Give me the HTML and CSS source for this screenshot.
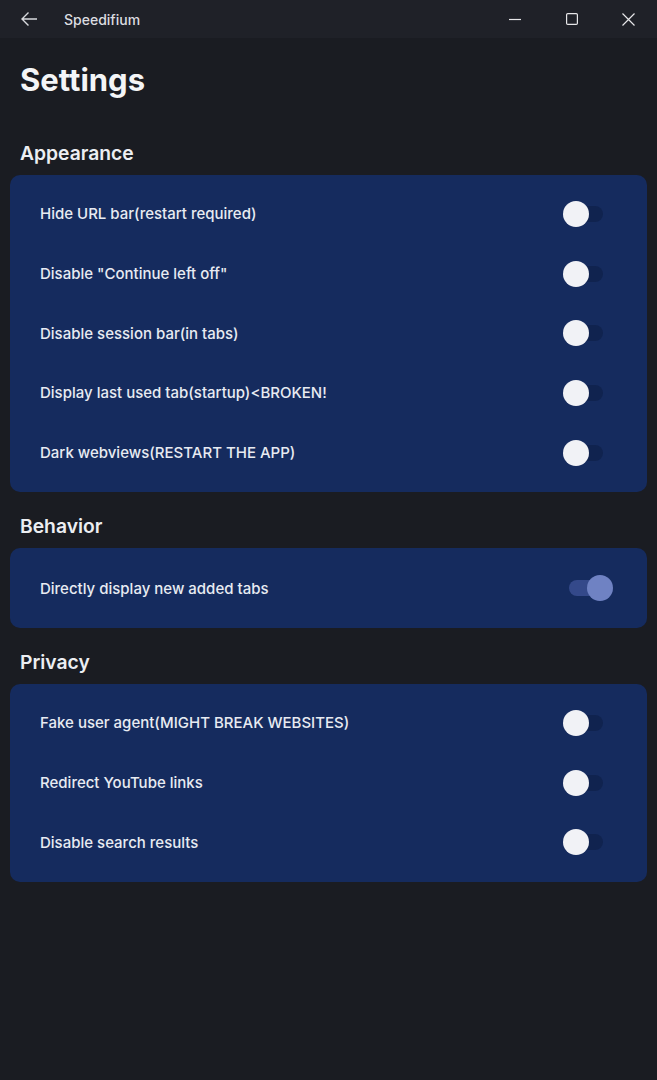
FILE: index.html
```html
<!DOCTYPE html>
<html lang="en">
  <head>
    <meta charset="UTF-8" />
    <meta name="viewport" content="width=device-width, initial-scale=1.0" />
    <title>Speedifium</title>
    <link rel="stylesheet" href="styles.css">
  </head>
  <body>
    <div class="titlebar">
      <div class="back">
        <svg width="18" height="16" viewBox="0 0 18 16"><path d="M17 8H2M8.5 1.5L2 8l6.5 6.5" fill="none" stroke="#d8d9dd" stroke-width="1.4"/></svg>
      </div>
      <span class="app-name">Speedifium</span>
      <div class="controls">
        <div class="ctrl"><svg width="12" height="12" viewBox="0 0 12 12"><path d="M0 6.5h12" stroke="#e6e6e8" stroke-width="1.2"/></svg></div>
        <div class="ctrl"><svg width="12" height="12" viewBox="0 0 12 12"><rect x="0.6" y="0.6" width="10.8" height="10.8" rx="1.2" fill="none" stroke="#e6e6e8" stroke-width="1.2"/></svg></div>
        <div class="ctrl"><svg width="13" height="13" viewBox="0 0 13 13"><path d="M0.5 0.5l12 12M12.5 0.5l-12 12" stroke="#e6e6e8" stroke-width="1.2"/></svg></div>
      </div>
    </div>

    <main class="page">
      <h1>Settings</h1>

      <h2>Appearance</h2>
      <section class="card">
        <div class="row"><span>Hide URL bar(restart required)</span><div class="switch"></div></div>
        <div class="row"><span>Disable "Continue left off"</span><div class="switch"></div></div>
        <div class="row"><span>Disable session bar(in tabs)</span><div class="switch"></div></div>
        <div class="row"><span>Display last used tab(startup)&lt;BROKEN!</span><div class="switch"></div></div>
        <div class="row"><span>Dark webviews(RESTART THE APP)</span><div class="switch"></div></div>
      </section>

      <h2>Behavior</h2>
      <section class="card single">
        <div class="row"><span>Directly display new added tabs</span><div class="switch on"></div></div>
      </section>

      <h2>Privacy</h2>
      <section class="card">
        <div class="row"><span>Fake user agent(MIGHT BREAK WEBSITES)</span><div class="switch"></div></div>
        <div class="row"><span>Redirect YouTube links</span><div class="switch"></div></div>
        <div class="row"><span>Disable search results</span><div class="switch"></div></div>
      </section>
    </main>
  </body>
</html>
```

FILE: styles.css
```css
* {
  box-sizing: border-box;
  font-family: "Inter", "Noto Sans", sans-serif;
}
body {
  margin: 0;
  background-color: #1a1c22;
  color: #eef0f4;
  height: 1080px;
}
.titlebar {
  height: 38px;
  background-color: #1f2128;
  display: flex;
  align-items: center;
}
.back {
  width: 58px;
  padding-left: 20px;
  display: flex;
  align-items: center;
}
.app-name {
  font-size: 14px;
  font-weight: 500;
  color: #dcdde0;
  margin-left: 6px;
}
.controls {
  margin-left: auto;
  display: flex;
}
.ctrl {
  width: 57px;
  height: 38px;
  display: flex;
  align-items: center;
  justify-content: center;
}
.page {
  padding: 0 10px;
}
h1 {
  margin: 0;
  padding-left: 10px;
  height: 82px;
  line-height: 84px;
  font-size: 31px;
  font-weight: 700;
  color: #f4f5f7;
}
h2 {
  margin: 12px 0 0;
  padding-left: 10px;
  height: 44px;
  line-height: 44px;
  font-size: 19.3px;
  font-weight: 600;
  color: #eceef2;
}
h1 + h2 {
  margin-top: 11px;
}
.card {
  background-color: #152b5e;
  border-radius: 10px;
  padding: 9px 0 10px;
}
.card.single {
  padding: 10px 0;
}
.row {
  height: 59.7px;
  display: flex;
  align-items: center;
  justify-content: space-between;
  padding: 0 44px 0 30px;
  font-size: 15px;
  font-weight: 500;
  color: #e8ebf2;
}
.switch {
  position: relative;
  width: 34px;
  height: 16px;
  border-radius: 8px;
  background-color: #10234f;
}
.switch::after {
  content: "";
  position: absolute;
  top: -5px;
  left: -6px;
  width: 26px;
  height: 26px;
  border-radius: 50%;
  background-color: #f1f2f6;
}
.switch.on {
  background-color: #34498a;
}
.switch.on::after {
  left: 18px;
  background-color: #6f82c3;
}
```
